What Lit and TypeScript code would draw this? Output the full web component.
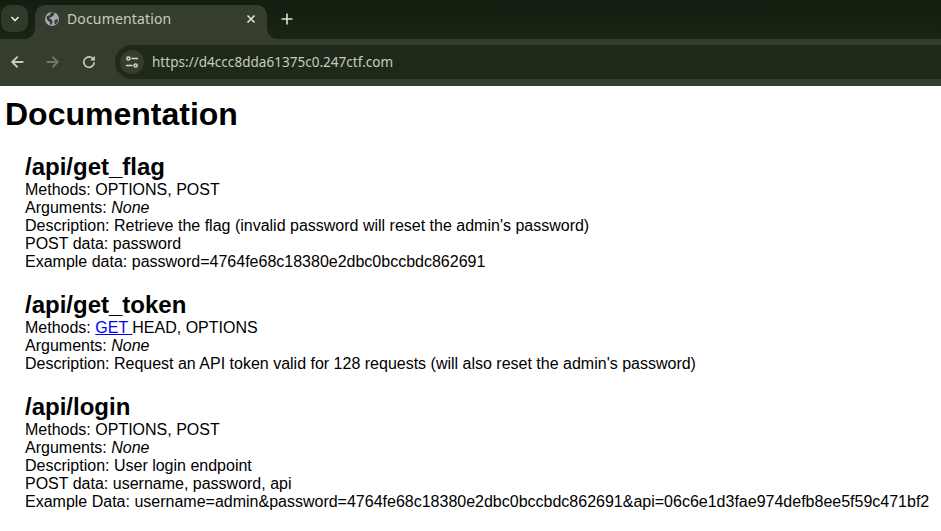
import { LitElement, html, css, svg } from "lit";
import { customElement } from "lit/decorators.js";

const arrow = (flip: boolean) => svg`<svg class="ico" viewBox="0 0 16 16" width="16" height="16" style=${flip ? "transform:scaleX(-1)" : ""}><path d="M14.4 8H3.5M8.6 2.6 3.2 8l5.4 5.4" fill="none" stroke="currentColor" stroke-width="1.9"/></svg>`;

@customElement("app-root")
export class AppRoot extends LitElement {
  static styles = css`
    :host { display: block; font-family: "Liberation Sans", Arial, sans-serif; color: #000; background: #fff; min-height: 531px; }
    .chrome { font-family: "Noto Sans", "Open Sans", sans-serif; display: flex; flex-direction: column; height: 86px; background: #343d2e; }
    .strip { height: 39px; background: linear-gradient(#121e0f, #1a2414); display: flex; align-items: flex-start; padding-top: 5px; box-sizing: border-box; position: relative; }
    .menu { width: 27px; height: 27px; margin-left: 1px; border-radius: 9px; background: #2f3a2b; color: #e4e9de; display: flex; align-items: center; justify-content: center; }
    .tab { position: relative; margin-left: 7px; width: 232px; height: 34px; background: #343d2e; border-radius: 10px 10px 0 0; display: flex; align-items: center; padding: 0 8px 6px 9px; box-sizing: border-box; color: #c6cdbf; font-size: 14px; letter-spacing: 0.15px; }
    .tab::before, .tab::after { content: ""; position: absolute; bottom: 0; width: 10px; height: 10px; background: radial-gradient(circle at var(--cx) 0, #1a2414 9.5px, #343d2e 10px); }
    .tab::before { left: -10px; --cx: 0; }
    .tab::after { right: -10px; --cx: 10px; }
    .tab .title { margin-left: 7px; flex: 1; padding-bottom: 2px; }
    .globe { color: #a3a8b3; }
    .close { color: #e1e6da; display: flex; margin-right: 3px; }
    .plus { color: #dde2d6; margin-left: 14px; margin-top: 8px; display: flex; }
    .bar { flex: 1; display: flex; align-items: flex-start; padding-top: 6px; box-sizing: border-box; }
    .nav { display: flex; align-items: center; height: 34px; color: #c2ccb8; }
    .nav .ico { display: block; }
    .nav .b1 { margin-left: 9px; }
    .nav .b2 { margin-left: 20px; color: #6f7968; }
    .nav .b3 { margin-left: 20px; }
    .omni { margin-left: 18px; flex: 1; height: 34px; background: #1f2919; border-radius: 17px 0 0 17px; display: flex; align-items: center; padding-left: 5px; color: #c6cdbf; font-size: 13.5px; letter-spacing: 0.03px; }
    .tune { width: 24px; height: 24px; border-radius: 50%; background: #343d2e; color: #d4dacd; display: flex; align-items: center; justify-content: center; margin-right: 8px; }
    .page { padding: 10px 5px 0; }
    h1 { font-size: 32px; font-weight: bold; margin: 0 0 19.92px; line-height: normal; }
    section { margin: 0 0 19.92px 20px; font-size: 16px; line-height: normal; }
    h2 { font-size: 24px; font-weight: bold; margin: 0; line-height: normal; }
    a { color: #0000ee; text-decoration: underline; }
  `;

  render() {
    return html`
      <div class="chrome">
        <div class="strip">
          <div class="menu"><svg viewBox="0 0 10 10" width="10" height="10"><path d="M1.5 3 5 6.5 8.5 3" fill="none" stroke="currentColor" stroke-width="1.6"/></svg></div>
          <div class="tab">
            <svg class="globe" viewBox="0 0 16 16" width="16" height="16"><circle cx="8" cy="8" r="7" fill="currentColor"/><path d="M2.5 5.5 6 4l1-2.5 3.5-.3L10 4 7.5 6 5 7l3 2 .5 2.5-1.5 3L5.5 11 3 8.5z M10.5 9l3.5-1-.5 3.5-3 2.2z" fill="#343d2e"/></svg>
            <span class="title">Documentation</span>
            <span class="close"><svg viewBox="0 0 10 10" width="10" height="10"><path d="M1.5 1.5l7 7M8.5 1.5l-7 7" stroke="currentColor" stroke-width="1.6"/></svg></span>
          </div>
          <span class="plus"><svg viewBox="0 0 12 12" width="12" height="12"><path d="M6 .5v11M.5 6h11" stroke="currentColor" stroke-width="1.6"/></svg></span>
        </div>
        <div class="bar">
          <div class="nav">
            <span class="b1">${arrow(false)}</span>
            <span class="b2">${arrow(true)}</span>
            <span class="b3"><svg class="ico" viewBox="0 0 16 16" width="16" height="16"><path d="M13.2 8.2a5.2 5.2 0 1 1-1.5-3.8L13.4 6" fill="none" stroke="currentColor" stroke-width="1.7"/><path d="M13.8 1.8V6.4H9.2z" fill="currentColor"/></svg></span>
          </div>
          <div class="omni">
            <span class="tune"><svg viewBox="0 0 14 14" width="14" height="14"><g fill="none" stroke="currentColor" stroke-width="1.5"><circle cx="3.4" cy="3.5" r="1.6"/><path d="M6.5 3.5H13M1 10.5h6.5"/><circle cx="10.6" cy="10.5" r="1.6"/></g></svg></span>
            <span>https://d4ccc8dda61375c0.247ctf.com</span>
          </div>
        </div>
      </div>
      <div class="page">
        <h1>Documentation</h1>
        <section>
          <h2>/api/get_flag</h2>
          <div>Methods: OPTIONS, POST</div>
          <div>Arguments: <i>None</i></div>
          <div>Description: Retrieve the flag (invalid password will reset the admin's password)</div>
          <div>POST data: password</div>
          <div>Example data: password=4764fe68c18380e2dbc0bccbdc862691</div>
        </section>
        <section>
          <h2>/api/get_token</h2>
          <div>Methods: <a href="#">GET </a>HEAD, OPTIONS</div>
          <div>Arguments: <i>None</i></div>
          <div>Description: Request an API token valid for 128 requests (will also reset the admin's password)</div>
        </section>
        <section>
          <h2>/api/login</h2>
          <div>Methods: OPTIONS, POST</div>
          <div>Arguments: <i>None</i></div>
          <div>Description: User login endpoint</div>
          <div>POST data: username, password, api</div>
          <div>Example Data: username=admin&password=4764fe68c18380e2dbc0bccbdc862691&api=06c6e1d3fae974defb8ee5f59c471bf2</div>
        </section>
      </div>
    `;
  }
}
